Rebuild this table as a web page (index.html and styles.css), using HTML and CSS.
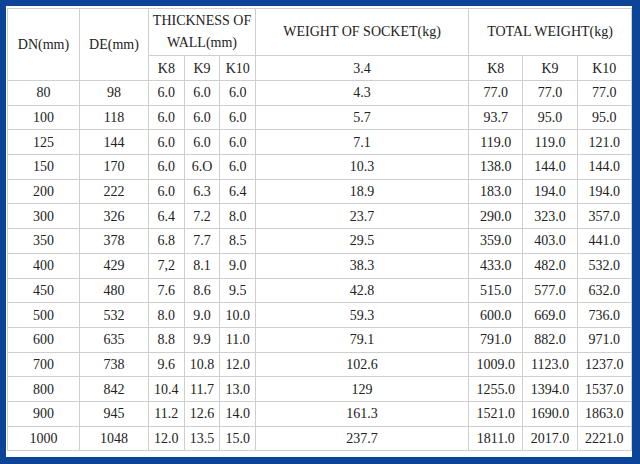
FILE: index.html
```html
<!DOCTYPE html>
<html>
<head>
<meta charset="utf-8">
<link rel="stylesheet" href="styles.css">
</head>
<body>
<div class="frame">
  <table class="spec">
    <colgroup>
      <col class="c-dn"><col class="c-de"><col class="c-k"><col class="c-k"><col class="c-k">
      <col class="c-w"><col class="c-t"><col class="c-t"><col class="c-t">
    </colgroup>
    <tr class="h1">
      <td rowspan="2">DN(mm)</td>
      <td rowspan="2">DE(mm)</td>
      <td colspan="3">THICKNESS OF WALL(mm)</td>
      <td>WEIGHT OF SOCKET(kg)</td>
      <td colspan="3">TOTAL WEIGHT(kg)</td>
    </tr>
    <tr class="h2">
      <td>K8</td><td>K9</td><td>K10</td><td>3.4</td><td>K8</td><td>K9</td><td>K10</td>
    </tr>
    <tr><td>80</td><td>98</td><td>6.0</td><td>6.0</td><td>6.0</td><td>4.3</td><td>77.0</td><td>77.0</td><td>77.0</td></tr>
    <tr><td>100</td><td>118</td><td>6.0</td><td>6.0</td><td>6.0</td><td>5.7</td><td>93.7</td><td>95.0</td><td>95.0</td></tr>
    <tr><td>125</td><td>144</td><td>6.0</td><td>6.0</td><td>6.0</td><td>7.1</td><td>119.0</td><td>119.0</td><td>121.0</td></tr>
    <tr><td>150</td><td>170</td><td>6.0</td><td>6.O</td><td>6.0</td><td>10.3</td><td>138.0</td><td>144.0</td><td>144.0</td></tr>
    <tr><td>200</td><td>222</td><td>6.0</td><td>6.3</td><td>6.4</td><td>18.9</td><td>183.0</td><td>194.0</td><td>194.0</td></tr>
    <tr><td>300</td><td>326</td><td>6.4</td><td>7.2</td><td>8.0</td><td>23.7</td><td>290.0</td><td>323.0</td><td>357.0</td></tr>
    <tr><td>350</td><td>378</td><td>6.8</td><td>7.7</td><td>8.5</td><td>29.5</td><td>359.0</td><td>403.0</td><td>441.0</td></tr>
    <tr><td>400</td><td>429</td><td>7,2</td><td>8.1</td><td>9.0</td><td>38.3</td><td>433.0</td><td>482.0</td><td>532.0</td></tr>
    <tr><td>450</td><td>480</td><td>7.6</td><td>8.6</td><td>9.5</td><td>42.8</td><td>515.0</td><td>577.0</td><td>632.0</td></tr>
    <tr><td>500</td><td>532</td><td>8.0</td><td>9.0</td><td>10.0</td><td>59.3</td><td>600.0</td><td>669.0</td><td>736.0</td></tr>
    <tr><td>600</td><td>635</td><td>8.8</td><td>9.9</td><td>11.0</td><td>79.1</td><td>791.0</td><td>882.0</td><td>971.0</td></tr>
    <tr><td>700</td><td>738</td><td>9.6</td><td>10.8</td><td>12.0</td><td>102.6</td><td>1009.0</td><td>1123.0</td><td>1237.0</td></tr>
    <tr><td>800</td><td>842</td><td>10.4</td><td>11.7</td><td>13.0</td><td>129</td><td>1255.0</td><td>1394.0</td><td>1537.0</td></tr>
    <tr><td>900</td><td>945</td><td>11.2</td><td>12.6</td><td>14.0</td><td>161.3</td><td>1521.0</td><td>1690.0</td><td>1863.0</td></tr>
    <tr><td>1000</td><td>1048</td><td>12.0</td><td>13.5</td><td>15.0</td><td>237.7</td><td>1811.0</td><td>2017.0</td><td>2221.0</td></tr>
  </table>
</div>
</body>
</html>
```
FILE: styles.css
```css
html, body {
  margin: 0;
  padding: 0;
}
body {
  background: #0c4597;
  width: 640px;
  height: 464px;
  overflow: hidden;
}
.frame {
  margin: 6px 8px 0 6px;
  width: 624px;
  height: 449px;
  padding: 2px 1px 0 1px;
  background: #fff;
}
.spec {
  border-collapse: collapse;
  table-layout: fixed;
  width: 624px;
  font-family: "Liberation Serif", "Times New Roman", serif;
  font-size: 14px;
  color: #222;
}
.spec td {
  border: 1px solid #cfcfcf;
  text-align: center;
  vertical-align: middle;
  padding: 0;
  height: 23.7px;
  line-height: 17px;
}
.spec .h1 td {
  height: 46px;
  line-height: 22px;
}
.spec .h2 td {
  height: 24px;
}
.c-dn { width: 72px; }
.c-de { width: 69px; }
.c-k { width: 35.7px; }
.c-w { width: 213px; }
.c-t { width: 54.3px; }
```
